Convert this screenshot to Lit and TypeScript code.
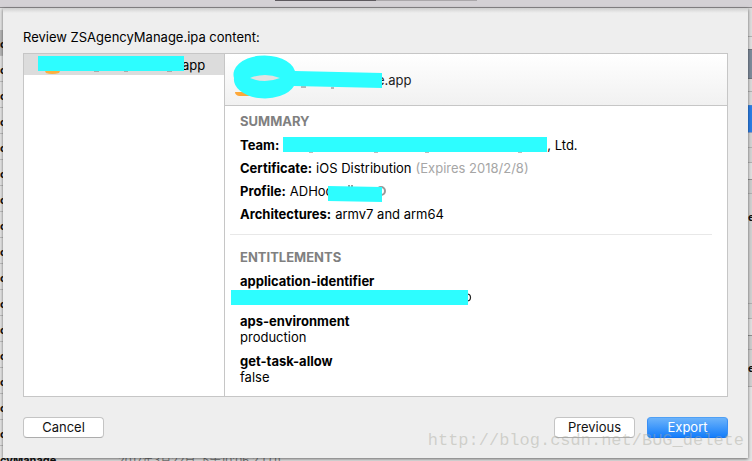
import { LitElement, html, css, svg } from "lit";
import { customElement } from "lit/decorators.js";
import { styleMap } from "lit/directives/style-map.js";

interface Strip {
  height: number;
  fill: string;
  line: string;
  label?: string;
}

/** The organizer window that stays visible around the edges of the sheet. */
@customElement("organizer-backdrop")
class OrganizerBackdrop extends LitElement {
  static styles = css`
    :host {
      display: grid;
      grid-template-columns: 1fr 4px;
      grid-template-rows: 8px 1fr;
      overflow: hidden;
      background: #e2e2e2;
      font: bold 11px/26px Inter, "Noto Sans CJK SC", sans-serif;
      color: #111;
    }
    .toolbar {
      grid-column: 1 / -1;
      display: flex;
      justify-content: center;
      box-sizing: border-box;
      background: #d4d1d5;
      border-bottom: 1px solid #8c8a8c;
    }
    .segment {
      width: 101px;
      height: 1px;
      background: #aaa7aa;
    }
    .segment.on {
      background: #5d595e;
    }
    .rows {
      margin: 0;
      padding: 22px 0 0;
      list-style: none;
      min-height: 0;
    }
    .row {
      display: flex;
      box-sizing: border-box;
      height: 26px;
      border-bottom: 1px solid #bcbcbc;
      line-height: 28px;
      white-space: nowrap;
    }
    .row.selected {
      background: #b5b5b5;
    }
    .name {
      width: 118px;
    }
    .date {
      font-weight: normal;
      color: #777;
    }
    .side {
      display: flex;
      flex-direction: column;
      min-height: 0;
    }
    .strip {
      flex: none;
      box-sizing: border-box;
      border-bottom: 1px solid;
      overflow: hidden;
      display: flex;
      align-items: center;
    }
  `;

  private strips: Strip[] = [
    { height: 29, fill: "#dcdcdc", line: "#b0b0b0" },
    { height: 13, fill: "#dedede", line: "#6e747c" },
    { height: 29, fill: "#7d8a9a", line: "#6e747c" },
    { height: 13, fill: "#d8d8d8", line: "#b0b0b0" },
    { height: 14, fill: "#d8d8d8", line: "#3f86d8" },
    { height: 27, fill: "#2a7de4", line: "#8a9cc4" },
    { height: 15, fill: "#d2d2d2", line: "#b0b0b0" },
    { height: 15, fill: "#d2d2d2", line: "#b0b0b0" },
    { height: 17, fill: "#dedede", line: "#8e8e8e" },
    { height: 14, fill: "#cccccc", line: "#b0b0b0" },
    { height: 46, fill: "#d0d0d0", line: "#d0d0d0", label: "e" },
    { height: 64, fill: "#d0d0d0", line: "#b0b0b0" },
    { height: 15, fill: "#d0d0d0", line: "#b0b0b0" },
    { height: 17, fill: "#dedede", line: "#8e8e8e" },
    { height: 14, fill: "#cccccc", line: "#b0b0b0" },
    { height: 37, fill: "#d0d0d0", line: "#b0b0b0", label: "e" },
  ];

  render() {
    return html`
      <div class="toolbar">
        <div class="segment on"></div>
        <div class="segment"></div>
      </div>
      <ul class="rows">
        <li class="row selected"><span class="name">c</span></li>
        ${Array.from({ length: 15 }, () => html`<li class="row"><span class="name">c</span></li>`)}
        <li class="row">
          <span class="name">cyManage</span><span class="date">2017年3月22日 下午10:06 2.1 (1)</span>
        </li>
      </ul>
      <div class="side">
        ${this.strips.map(
          (s) => html`<div
            class="strip"
            style=${styleMap({ height: `${s.height}px`, background: s.fill, borderColor: s.line })}
          >${s.label ?? ""}</div>`
        )}
      </div>
    `;
  }
}

const INK = "#2dfdff";
const ORANGE = "#fbb040";

@customElement("app-root")
class AppRoot extends LitElement {
  static styles = css`
    :host {
      display: flow-root;
      position: relative;
      min-height: 100vh;
      overflow: hidden;
      font: 13px/16px Inter, "Liberation Sans", sans-serif;
      color: #000;
    }
    organizer-backdrop {
      position: absolute;
      inset: 0;
    }
    .sheet {
      position: relative;
      margin: 8px 4px 3px 3px;
      padding: 21px 20px 20px;
      background: linear-gradient(#cfcfcf, #eee 5px);
      box-shadow: 0 1px 3px #0008;
    }
    .title {
      margin: 0 0 8px;
      font: inherit;
    }
    .panes {
      display: grid;
      grid-template-columns: 201px 1fr;
      border: 1px solid #c6c6c6;
      background: #fff;
    }
    .files {
      margin: 0;
      padding: 0;
      list-style: none;
      border-right: 1px solid #c6c6c6;
    }
    .file {
      display: flex;
      align-items: center;
      height: 21px;
      padding-left: 14px;
      background: #dcdcdc;
    }
    svg {
      display: block;
      flex: none;
      overflow: visible;
      position: relative;
      z-index: 1;
    }
    .app {
      display: flex;
      align-items: center;
      height: 51px;
      padding-left: 8px;
      border-bottom: 1px solid #c6c6c6;
      background: linear-gradient(#fff, #f1f1f1);
      color: #222;
    }
    .body {
      padding: 7px 15px 11px 5px;
    }
    .group {
      padding-left: 10px;
    }
    h2 {
      margin: 0 0 4px;
      font: bold 13px/16px Inter, sans-serif;
      color: #808080;
    }
    .facts,
    .rights {
      margin: 0;
    }
    dt {
      font-weight: bold;
    }
    dd {
      margin: 0;
    }
    .fact {
      display: flex;
      align-items: center;
      gap: 4px;
      height: 23px;
      white-space: nowrap;
    }
    .fact dd {
      display: flex;
      align-items: center;
    }
    .muted {
      margin-left: 4px;
      color: #a6a6a6;
    }
    .rule {
      height: 1px;
      margin: 9px 0 14px;
      border: 0;
      background: #e8e8e8;
    }
    .right {
      margin-top: 8px;
    }
    .right dd {
      display: flex;
      height: 16px;
    }
    .wide {
      margin-left: -9px;
    }
    .actions {
      display: flex;
      gap: 12px;
      margin-top: 20px;
    }
    button {
      width: 81px;
      height: 21px;
      padding: 0;
      border: 1px solid #c4c4c4;
      border-bottom-color: #acacac;
      border-radius: 4px;
      background: #fff;
      font: inherit;
      line-height: 19px;
      color: #111;
    }
    .cancel {
      margin-right: auto;
    }
    .primary {
      border-color: #4fa0f5 #3a8ff5 #1273f0;
      background: linear-gradient(#6cb3fa, #157efb);
      color: #fff;
    }
    .mark {
      position: absolute;
      right: 4px;
      bottom: 7px;
      font: 17px/20px "Liberation Mono", monospace;
      color: #a8a89c70;
      pointer-events: none;
    }
  `;

  private bar(width: number, marks: number[] = []) {
    return html`<svg width=${width} height="16" viewBox="0 0 ${width} 16" aria-hidden="true">
      <rect width=${width} height="15" fill=${INK} />
      ${marks.map((x) => svg`<rect x=${x} y="15" width="4" height="1" fill="#bbb" />`)}
    </svg>`;
  }

  render() {
    return html`
      <organizer-backdrop></organizer-backdrop>
      <main class="sheet">
        <h1 class="title">Review ZSAgencyManage.ipa content:</h1>
        <div class="panes">
          <ul class="files">
            <li class="file">
              <svg width="144" height="20" viewBox="0 0 144 20" aria-hidden="true">
                <path d="M6 14h17l-2 4q-7 2-13 0z" fill=${ORANGE} />
                <path d="M56 16h5M86 16h4M129 16h5" stroke="#777" />
                <rect y="1" width="146" height="15" fill=${INK} />
              </svg>
              <span>app</span>
            </li>
          </ul>
          <section>
            <div class="app">
              <svg width="144" height="44" viewBox="0 0 144 44" aria-hidden="true">
                <path d="M2 34h22v4H6q-4-1-4-4z" fill="#fda83a" />
                <path d="M68 29h5M98 30h3" stroke="#777" />
                <ellipse cx="32" cy="20" rx="20" ry="6" fill="#e2e2e2" />
                <path fill-rule="evenodd" fill=${INK}
                  d="M1 20a31 19 0 0 1 61-7l87 2v15l-88-2a31 19 0 0 1-60-8zM17 20q15 6 30 0q-15-6-30 0z" />
              </svg>
              <span>e.app</span>
            </div>
            <div class="body">
              <div class="group">
                <h2>SUMMARY</h2>
                <dl class="facts">
                  <div class="fact"><dt>Team:</dt><dd>${this.bar(264, [26, 91, 142, 235])}, Ltd.</dd></div>
                  <div class="fact">
                    <dt>Certificate:</dt>
                    <dd>iOS Distribution <span class="muted">(Expires 2018/2/8)</span></dd>
                  </div>
                  <div class="fact">
                    <dt>Profile:</dt>
                    <dd>ADHoc<svg width="54" height="22" viewBox="8 0 54 22" aria-hidden="true">
                      <path d="M24 5v3M27 5v3" stroke="#333" fill="none" />
                      <circle cx="56" cy="11" r="4" fill="none" stroke="#999" stroke-width="2" />
                      <path d="M3 6l54 1v15l-54-1z" fill=${INK} />
                    </svg></dd>
                  </div>
                  <div class="fact"><dt>Architectures:</dt><dd>armv7 and arm64</dd></div>
                </dl>
              </div>
              <hr class="rule" />
              <div class="group">
                <h2>ENTITLEMENTS</h2>
                <dl class="rights">
                  <div class="right">
                    <dt>application-identifier</dt>
                    <dd>
                      <svg class="wide" width="241" height="16" viewBox="0 0 241 16" aria-hidden="true">
                        <path d="M236 5a3 3 0 0 1 0 7" fill="none" stroke="#222" stroke-width="1.2" />
                        <rect y="1" width="237" height="15" fill=${INK} />
                      </svg>
                    </dd>
                  </div>
                  <div class="right"><dt>aps-environment</dt><dd>production</dd></div>
                  <div class="right"><dt>get-task-allow</dt><dd>false</dd></div>
                </dl>
              </div>
            </div>
          </section>
        </div>
        <div class="actions">
          <button class="cancel" type="button">Cancel</button>
          <button type="button">Previous</button>
          <button class="primary" type="button">Export</button>
        </div>
        <div class="mark">http://blog.csdn.net/BUG_delete</div>
      </main>
    `;
  }
}
